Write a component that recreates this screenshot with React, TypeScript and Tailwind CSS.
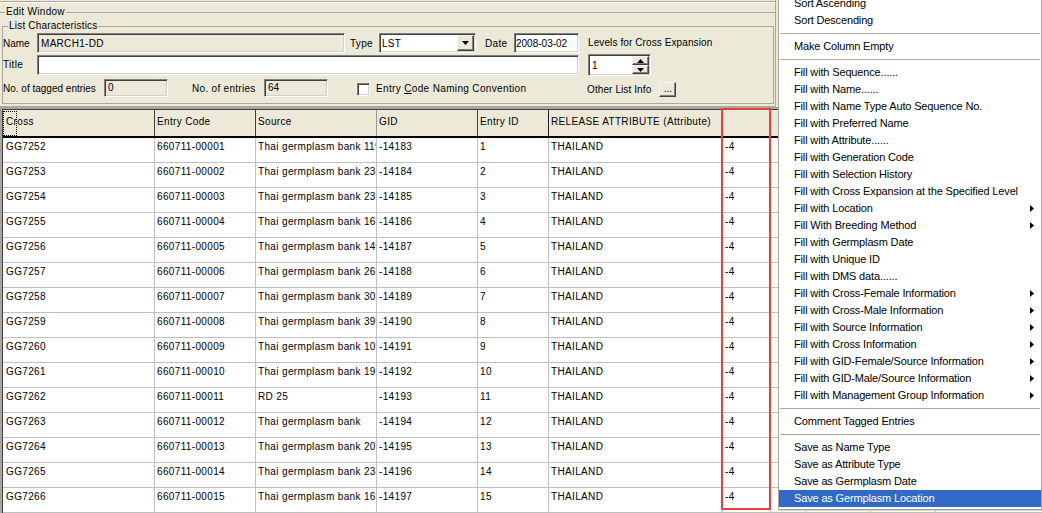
import React from 'react';

const sunken =
  'border border-t-[#808080] border-l-[#808080] border-r-white border-b-white shadow-[inset_1px_1px_0_#404040,inset_-1px_-1px_0_#d4d0c8]';
const raised =
  'border border-t-[#f4f3ee] border-l-[#f4f3ee] border-r-[#404040] border-b-[#404040] shadow-[inset_-1px_-1px_0_#808080]';

type MenuItem = { label: string; sub?: boolean; active?: boolean } | 'sep';

const menuItems: MenuItem[] = [
  { label: 'Sort Ascending' },
  { label: 'Sort Descending' },
  'sep',
  { label: 'Make Column Empty' },
  'sep',
  { label: 'Fill with Sequence......' },
  { label: 'Fill with Name......' },
  { label: 'Fill with Name Type Auto Sequence No.' },
  { label: 'Fill with Preferred Name' },
  { label: 'Fill with Attribute......' },
  { label: 'Fill with Generation Code' },
  { label: 'Fill with Selection History' },
  { label: 'Fill with Cross Expansion at the Specified Level' },
  { label: 'Fill with Location', sub: true },
  { label: 'Fill With Breeding Method', sub: true },
  { label: 'Fill with Germplasm Date' },
  { label: 'Fill with Unique ID' },
  { label: 'Fill with DMS data......' },
  { label: 'Fill with Cross-Female Information', sub: true },
  { label: 'Fill with Cross-Male Information', sub: true },
  { label: 'Fill with Source Information', sub: true },
  { label: 'Fill with Cross Information', sub: true },
  { label: 'Fill with GID-Female/Source Information', sub: true },
  { label: 'Fill with GID-Male/Source Information', sub: true },
  { label: 'Fill with Management Group Information', sub: true },
  'sep',
  { label: 'Comment Tagged Entries' },
  'sep',
  { label: 'Save as Name Type' },
  { label: 'Save as Attribute Type' },
  { label: 'Save as Germplasm Date' },
  { label: 'Save as Germplasm Location', active: true },
];

const sources = [
  'Thai germplasm bank 1190',
  'Thai germplasm bank 2300',
  'Thai germplasm bank 2301',
  'Thai germplasm bank 1620',
  'Thai germplasm bank 1470',
  'Thai germplasm bank 2600',
  'Thai germplasm bank 3090',
  'Thai germplasm bank 3990',
  'Thai germplasm bank 1040',
  'Thai germplasm bank 1930',
  'RD 25',
  'Thai germplasm bank',
  'Thai germplasm bank 2070',
  'Thai germplasm bank 2340',
  'Thai germplasm bank 1630',
];

const rows = sources.map((src, i) => ({
  cross: `GG${7252 + i}`,
  code: `660711-${String(i + 1).padStart(5, '0')}`,
  source: src,
  gid: `-${14183 + i}`,
  entry: String(i + 1),
  attr: 'THAILAND',
  val: '-4',
}));

// widths of the grid columns, left to right
const cols = [
  { title: 'Cross', w: 'w-[152px]', line: 'border-[#404040]' },
  { title: 'Entry Code', w: 'w-[101px]', line: 'border-[#404040]' },
  { title: 'Source', w: 'w-[121px]', line: 'border-[#9a9a9a]' },
  { title: 'GID', w: 'w-[101px]', line: 'border-[#404040]' },
  { title: 'Entry ID', w: 'w-[71px]', line: 'border-[#202020]' },
  { title: 'RELEASE ATTRIBUTE (Attribute)', w: 'w-[174px]', line: 'border-[#202020]' },
  { title: '', w: 'w-[48px]', line: 'border-[#404040]' },
  { title: '', w: 'w-[35px]', line: 'border-[#404040]' },
  { title: '', w: 'w-[65px]', line: 'border-[#404040]' },
  { title: '', w: 'w-[65px]', line: 'border-[#404040]' },
  { title: '', w: 'w-[107px]', line: 'border-[#404040]' },
];

function Arrow({ dir }: { dir: 'up' | 'down' | 'right' }) {
  if (dir === 'right')
    return (
      <svg width="4" height="7" viewBox="0 0 4 7">
        <path d="M0 0 L4 3.5 L0 7 Z" fill="currentColor" />
      </svg>
    );
  return (
    <svg width="7" height="4" viewBox="0 0 7 4">
      <path d={dir === 'down' ? 'M0 0 L7 0 L3.5 4 Z' : 'M0 4 L7 4 L3.5 0 Z'} fill="#000" />
    </svg>
  );
}

function TopPanel() {
  return (
    <div className="w-[776px] h-[107px] shrink-0 border-r border-b border-[#aca899]">
      <div className="h-[2px] border-b border-[#aca899]" />
      <div className="h-px bg-white" />
      <div className="flex items-center h-[18px]">
        <span className="w-[5px] h-px bg-[#aca899]" />
        <span className="px-px text-[10px] leading-[12px] tracking-[0.3px]">Edit Window</span>
        <span className="flex-1 h-px bg-[#aca899]" />
      </div>
      <fieldset className="ml-[2px] w-[772px] h-[83px] border border-[#aca899]">
        <legend className="ml-[5px] px-px text-[10px] leading-[10px] tracking-[0.2px]">List Characteristics</legend>

        <div className="flex items-center h-[20px] mt-[2px] text-[10px]">
          <span className="w-[34px]">Name</span>
          <div className={`w-[308px] h-full flex items-center pl-[3px] bg-[#ece9d8] tracking-[0.3px] ${sunken}`}>MARCH1-DD</div>
          <span className="ml-[5px] w-[29px] tracking-[0.3px]">Type</span>
          <div className={`w-[97px] h-full flex items-center bg-white ${sunken}`}>
            <span className="flex-1 pl-[2px] tracking-[0.3px]">LST</span>
            <div className={`w-[17px] h-[16px] mr-[1px] flex items-center justify-center bg-[#ece9d8] ${raised}`}>
              <Arrow dir="down" />
            </div>
          </div>
          <span className="ml-[9px] w-[29px] tracking-[0.3px]">Date</span>
          <div className={`w-[65px] h-full flex items-center pl-[1px] bg-white ${sunken}`}>2008-03-02</div>
          <span className="ml-[9px] -mt-[2px] tracking-[0.1px]">Levels for Cross Expansion</span>
        </div>

        <div className="flex items-center h-[20px] mt-[2px] text-[10px]">
          <span className="w-[34px] -mt-[2px] tracking-[0.3px]">Title</span>
          <div className={`w-[542px] h-full bg-white ${sunken}`} />
          <div className={`ml-[9px] w-[63px] h-[22px] flex items-center bg-white ${sunken}`}>
            <span className="flex-1 pl-[3px]">1</span>
            <div className="w-[17px] h-[18px] mr-px flex flex-col">
              <div className={`h-[9px] flex items-center justify-center bg-[#ece9d8] ${raised}`}>
                <Arrow dir="up" />
              </div>
              <div className={`h-[9px] flex items-center justify-center bg-[#ece9d8] ${raised}`}>
                <Arrow dir="down" />
              </div>
            </div>
          </div>
        </div>

        <div className="flex items-center h-[18px] mt-[4px] text-[10px]">
          <span className="w-[101px] whitespace-nowrap">No. of tagged entries</span>
          <div className={`w-[64px] h-full flex items-end pl-[3px] pb-px bg-[#ece9d8] ${sunken}`}>0</div>
          <span className="ml-[24px] w-[72px] tracking-[0.3px]">No. of entries</span>
          <div className={`w-[64px] h-full flex items-end pl-[3px] pb-px bg-[#ece9d8] ${sunken}`}>64</div>
          <div className={`ml-[29px] w-[13px] h-[13px] mt-[3px] bg-white ${sunken}`} />
          <span className="ml-[6px] w-[211px] tracking-[0.35px]">
            Entry <span className="underline">C</span>ode Naming Convention
          </span>
          <span className="mt-[3px] tracking-[0.1px]">Other List Info</span>
          <div className={`ml-[8px] mt-[3px] w-[17px] h-[15px] flex items-end justify-center pb-[2px] leading-none bg-[#ece9d8] ${raised}`}>
            ...
          </div>
        </div>
      </fieldset>
    </div>
  );
}

function Grid() {
  return (
    <div className="flex-1 border-t-2 border-l-2 border-[#a7a6a0]">
      <div className="h-full border-t border-l border-[#404040] bg-white overflow-hidden">
        <div className="flex h-[28px] bg-[#ece9d8] border-b-2 border-black text-[10px] tracking-[0.35px]">
          {cols.map((c, i) => (
            <div
              key={i}
              className={`${c.w} shrink-0 relative border-r ${c.line} ${i === 0 ? 'pl-[3px]' : 'pl-[2px]'} pt-[6px] leading-[12px] whitespace-nowrap`}
            >
              {i === 0 && (
                <span className="absolute left-0 top-px w-[14px] h-[25px] border border-dotted border-black" />
              )}
              {c.title}
            </div>
          ))}
        </div>
        {rows.map((r) => {
          const cells = [r.cross, r.code, r.source, r.gid, r.entry, r.attr, r.val, '', '', '', ''];
          return (
            <div key={r.cross} className="flex h-[25px] border-b border-[#c0c0c0] text-[10px] tracking-[0.35px]">
              {cells.map((v, i) => (
                <div
                  key={i}
                  className={`${cols[i].w} shrink-0 overflow-hidden whitespace-nowrap border-r border-[#c0c0c0] ${i === 0 ? 'pl-[3px]' : 'pl-[2px]'} pt-[3px] leading-[12px]`}
                >
                  {v}
                </div>
              ))}
            </div>
          );
        })}
      </div>
    </div>
  );
}

function ContextMenu() {
  return (
    <div className="absolute left-[778px] top-[-8px] w-[264px] bg-white border border-[#aca899] py-[2px] text-[11px] tracking-[-0.15px] shadow-[1px_1px_0_#d4d0c8]">
      {menuItems.map((m, i) =>
        m === 'sep' ? (
          <div key={i} className="h-[9px] pt-[4px] px-px">
            <div className="h-px bg-[#aca899]" />
          </div>
        ) : (
          <div
            key={i}
            className={`h-[17px] flex items-center justify-between pl-[15px] pr-[7px] whitespace-nowrap ${
              m.active ? 'bg-[#316ac5] text-white' : 'text-black'
            }`}
          >
            <span>{m.label}</span>
            {m.sub && <Arrow dir="right" />}
          </div>
        )
      )}
    </div>
  );
}

export default function App() {
  return (
    <div className="relative w-[1042px] h-[513px] overflow-hidden bg-[#ece9d8] text-black font-['Liberation_Sans',Arial,sans-serif]">
      <div className="flex flex-col h-full">
        <TopPanel />
        <Grid />
      </div>
      {/* annotation box round the empty column */}
      <div className="absolute left-[721px] top-[108px] w-[50px] h-[402px] border-2 border-[#e6403f] rounded-[1px]" />
      <ContextMenu />
    </div>
  );
}
